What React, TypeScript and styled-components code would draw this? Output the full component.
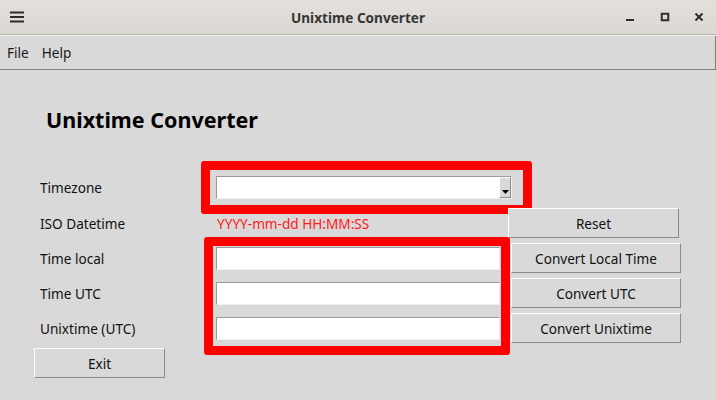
import React from 'react';
import styled, { createGlobalStyle } from 'styled-components';

const GlobalStyle = createGlobalStyle`
  html, body {
    margin: 0;
    padding: 0;
    background: #d9d9d9;
  }
  body {
    font-family: "Noto Sans", "Open Sans", sans-serif;
    color: #111;
  }
`;

const Window = styled.div`
  width: 716px;
  height: 400px;
  background: #d9d9d9;
  overflow: hidden;
  display: flex;
  flex-direction: column;
`;

const TitleBar = styled.div`
  height: 34px;
  flex: none;
  display: flex;
  align-items: center;
  background: linear-gradient(#e3e0dc, #dcd8d4);
  border-bottom: 1px solid #b9b3ad;
  box-shadow: 0 1px 0 #f4f2f0;
`;

const TitleSide = styled.div<{ $right?: boolean }>`
  width: 102px;
  height: 34px;
  flex: none;
  display: flex;
  align-items: center;
  justify-content: ${p => (p.$right ? 'flex-end' : 'flex-start')};
  padding-left: ${p => (p.$right ? 0 : 9)}px;
  box-sizing: border-box;
`;

const TitleText = styled.div`
  flex: 1;
  text-align: center;
  font-weight: bold;
  font-size: 13.6px;
  color: #363636;
`;

const TitleButton = styled.div`
  width: 34px;
  height: 34px;
  display: flex;
  align-items: center;
  justify-content: center;
`;

const MenuBar = styled.div`
  height: 33px;
  flex: none;
  margin-top: 1px;
  display: flex;
  align-items: center;
  gap: 13px;
  padding-left: 7px;
  border-bottom: 1px solid #7f7f7f;
  border-right: 1px solid #7f7f7f;
  font-size: 13.6px;
  color: #1a1a1a;
`;

const Content = styled.div`
  display: flex;
  flex-direction: column;
  padding-left: 34px;
`;

const Heading = styled.h1`
  margin: 35px 0 0 12px;
  font-size: 21.5px;
  line-height: 30px;
  font-weight: bold;
  color: #000;
`;

const Row = styled.div<{ $offset?: number }>`
  display: flex;
  align-items: center;
  margin-top: ${p => p.$offset ?? 0}px;
`;

const LabelCell = styled.div<{ $width?: number }>`
  width: ${p => p.$width ?? 167}px;
  flex: none;
  padding-left: 6px;
  box-sizing: border-box;
  font-size: 13.6px;
  color: #111;
`;

const Highlight = styled.div<{ $w: number; $h: number }>`
  width: ${p => p.$w}px;
  height: ${p => p.$h}px;
  box-sizing: border-box;
  border: 9px solid #ff0000;
  border-radius: 3px;
  flex: none;
`;

const ComboFrame = styled(Highlight)`
  display: flex;
  align-items: center;
  padding-left: 6px;
`;

const Combo = styled.div`
  width: 296px;
  height: 23px;
  box-sizing: border-box;
  display: flex;
  background: #fff;
  border: 1px solid;
  border-color: #9a9a9a #f0f0f0 #f0f0f0 #9a9a9a;
`;

const ComboField = styled.div`
  flex: 1;
`;

const ComboArrow = styled.div`
  width: 12px;
  background: #d9d9d9;
  border: 1px solid;
  border-color: #ffffff #8a8a8a #8a8a8a #ffffff;
  display: flex;
  align-items: flex-end;
  justify-content: center;
  padding-bottom: 3px;
  box-sizing: border-box;
`;

const Hint = styled.div`
  width: 307px;
  flex: none;
  padding-left: 16px;
  box-sizing: border-box;
  font-size: 13.6px;
  color: #ff1a1a;
`;

const Button = styled.button<{ $w: number }>`
  width: ${p => p.$w}px;
  height: 30px;
  flex: none;
  box-sizing: border-box;
  background: #d9d9d9;
  border: 1px solid;
  border-color: #ffffff #8a8a8a #8a8a8a #ffffff;
  font-family: "Noto Sans", "Open Sans", sans-serif;
  font-size: 13.6px;
  color: #111;
  padding: 0;
`;

const Group = styled.div`
  display: flex;
  align-items: flex-start;
  margin-top: -1px;
`;

const LabelColumn = styled.div`
  width: 170px;
  flex: none;
  padding-top: 4px;
  display: flex;
  flex-direction: column;
`;

const LabelRow = styled(LabelCell)`
  height: 35px;
  display: flex;
  align-items: center;
`;

const EntryFrame = styled(Highlight)`
  display: flex;
  flex-direction: column;
  gap: 12px;
  padding: 1px 0 0 3px;
`;

const Entry = styled.input`
  width: 284px;
  height: 23px;
  box-sizing: border-box;
  margin: 0;
  padding: 0 3px;
  background: #fff;
  border: 1px solid;
  border-color: #9a9a9a #f0f0f0 #f0f0f0 #9a9a9a;
  outline: none;
  font-family: "Noto Sans", "Open Sans", sans-serif;
  font-size: 13.6px;
`;

const ButtonColumn = styled.div`
  display: flex;
  flex-direction: column;
  gap: 5px;
  padding-top: 6px;
  margin-left: 1px;
`;

const ExitRow = styled.div`
  margin-top: -7px;
`;

const App: React.FC = () => {
  return (
    <>
      <GlobalStyle />
      <Window>
        <TitleBar>
          <TitleSide>
            <svg width="16" height="12" viewBox="0 0 16 12">
              <rect x="1" y="0.5" width="14" height="2" fill="#2e2e2e" />
              <rect x="1" y="5" width="14" height="2" fill="#2e2e2e" />
              <rect x="1" y="9.5" width="14" height="2" fill="#2e2e2e" />
            </svg>
          </TitleSide>
          <TitleText>Unixtime Converter</TitleText>
          <TitleSide $right>
            <TitleButton>
              <svg width="10" height="10" viewBox="0 0 10 10">
                <rect x="0" y="7" width="8" height="2" fill="#2e2e2e" />
              </svg>
            </TitleButton>
            <TitleButton>
              <svg width="10" height="10" viewBox="0 0 10 10">
                <rect x="1.75" y="1.75" width="6.5" height="6.5" fill="none" stroke="#2e2e2e" strokeWidth="2" />
              </svg>
            </TitleButton>
            <TitleButton>
              <svg width="10" height="10" viewBox="0 0 10 10">
                <path d="M1.5 1.5 L8.5 8.5 M8.5 1.5 L1.5 8.5" stroke="#2e2e2e" strokeWidth="2" />
              </svg>
            </TitleButton>
          </TitleSide>
        </TitleBar>
        <MenuBar>
          <span>File</span>
          <span>Help</span>
        </MenuBar>
        <Content>
          <Heading>Unixtime Converter</Heading>
          <Row $offset={26}>
            <LabelCell>Timezone</LabelCell>
            <ComboFrame $w={331} $h={53}>
              <Combo>
                <ComboField />
                <ComboArrow>
                  <svg width="7" height="4" viewBox="0 0 7 4">
                    <path d="M0 0 H7 L3.5 4 Z" fill="#000" />
                  </svg>
                </ComboArrow>
              </Combo>
            </ComboFrame>
          </Row>
          <Row $offset={-6}>
            <LabelCell>ISO Datetime</LabelCell>
            <Hint>YYYY-mm-dd HH:MM:SS</Hint>
            <Button $w={171}>Reset</Button>
          </Row>
          <Group>
            <LabelColumn>
              <LabelRow>Time local</LabelRow>
              <LabelRow>Time UTC</LabelRow>
              <LabelRow>Unixtime (UTC)</LabelRow>
            </LabelColumn>
            <EntryFrame $w={306} $h={118}>
              <Entry />
              <Entry />
              <Entry />
            </EntryFrame>
            <ButtonColumn>
              <Button $w={170}>Convert Local Time</Button>
              <Button $w={170}>Convert UTC</Button>
              <Button $w={170}>Convert Unixtime</Button>
            </ButtonColumn>
          </Group>
          <ExitRow>
            <Button $w={131}>Exit</Button>
          </ExitRow>
        </Content>
      </Window>
    </>
  );
};

export default App;
